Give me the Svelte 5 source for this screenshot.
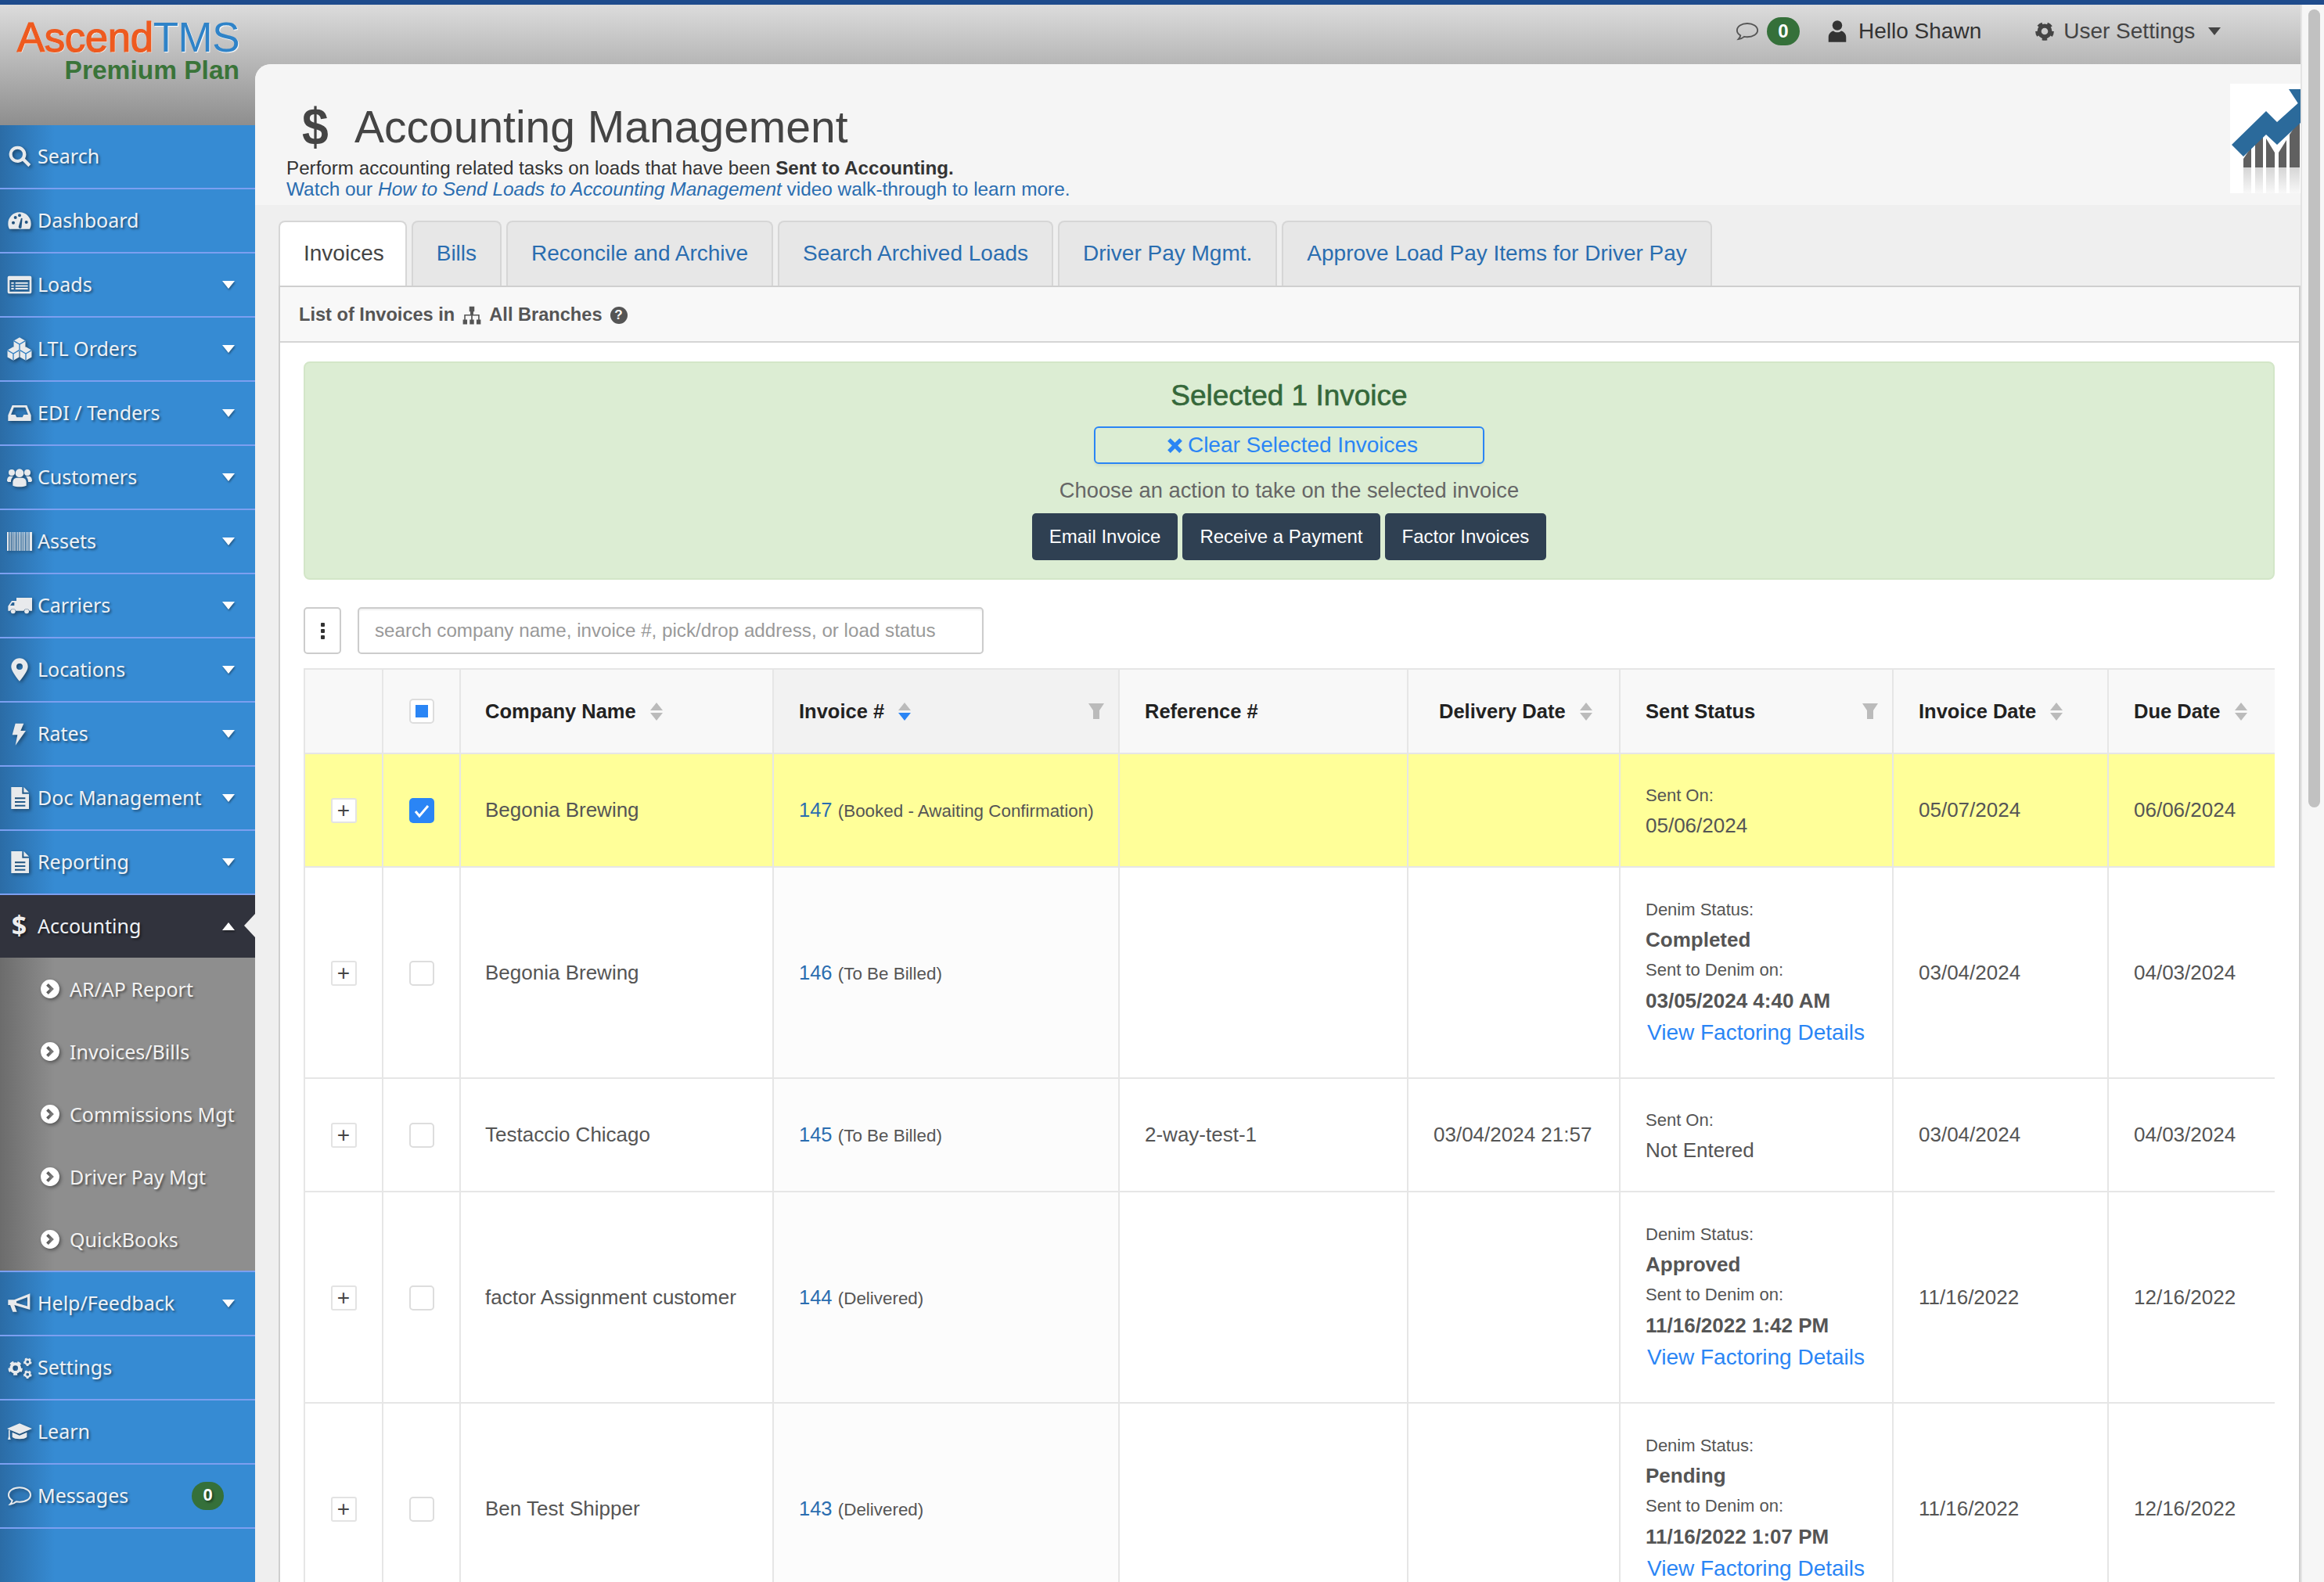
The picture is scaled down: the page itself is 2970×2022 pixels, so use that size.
<script>
  const gear = (cx, cy, r) =>
    `<circle cx="${cx}" cy="${cy}" r="${r}" fill="none" stroke="currentColor" stroke-width="${r * 0.75}"/>` +
    `<circle cx="${cx}" cy="${cy}" r="${r * 1.45}" fill="none" stroke="currentColor" stroke-width="${r * 0.55}" stroke-dasharray="${r * 0.9} ${r * 0.92}"/>`;

  const cube = (x, y) =>
    `<path d="M${x} ${y - 6.5}l5.6 3.2v6.6L${x} ${y + 6.5}l-5.6-3.2v-6.6z"/>` +
    `<path d="M${x - 5.6} ${y - 3.3}L${x} ${y}l5.6-3.3M${x} ${y}v6.5" fill="none" stroke="#2f7dc0" stroke-width="1"/>`;

  const icons = {
    search: '<path fill-rule="evenodd" d="M10 2a8 8 0 1 0 4.9 14.3l5.6 5.6 2.2-2.4-5.5-5.5A8 8 0 0 0 10 2zm0 3a5 5 0 1 1 0 10 5 5 0 0 1 0-10z"/>',
    dashboard: '<path fill-rule="evenodd" d="M12 4C5.4 4 1 9.2 1 15c0 2 .5 3.6 1.3 5h19.4c.8-1.4 1.3-3 1.3-5 0-5.8-4.4-11-11-11zM6 12.5a1.5 1.5 0 1 1 0 3 1.5 1.5 0 0 1 0-3zM8 7.5a1.5 1.5 0 1 1 0 3 1.5 1.5 0 0 1 0-3zM12 5.500a1.500 1.500 0 1 1 0 3 1.500 1.500 0 0 1 0-3zM18.500 12a1.500 1.500 0 1 1 0 3 1.500 1.500 0 0 1 0-3zM11 18l2.500-8.500 1.200.3-.8 8.700a1.500 1.500 0 0 1-2.900-.5z"/>',
    list: '<path fill-rule="evenodd" d="M2 3.500h20A1.500 1.500 0 0 1 23.500 5v14a1.500 1.500 0 0 1-1.500 1.500H2A1.500 1.500 0 0 1 .5 19V5A1.500 1.500 0 0 1 2 3.500zM2.500 7.500v11h19v-11zM4 9.500h2.500V11H4zM8 9.500h12V11H8zM4 12.300h2.500v1.500H4zM8 12.300h12v1.500H8zM4 15h2.500v1.500H4zM8 15h12v1.500H8z"/>',
    cubes: cube(12, 7.5) + cube(6, 16.5) + cube(18, 16.5),
    inbox: '<path fill-rule="evenodd" d="M1 14 5 4.500h14L23 14v5.500H1zM6.500 6.500 3.800 13.500H8l1.200 2.500h5.600l1.200-2.500h4.200L17.500 6.500z"/>',
    group: '<circle cx="12" cy="8" r="4"/><circle cx="4.500" cy="7.500" r="3"/><circle cx="19.500" cy="7.500" r="3"/><path d="M5.500 20v-3c0-3 2-4.500 4-4.500h5c2 0 4 1.500 4 4.500v3c-4 1.500-9 1.500-13 0zM0 15.500c0-3 1.500-4.500 3-4.500h3c-1.500 1.500-2.300 3-2.300 5.500H1zM24 15.500c0-3-1.500-4.500-3-4.500h-3c1.500 1.500 2.300 3 2.300 5.500H23z"/>',
    barcode: '<path d="M0 3h1.500v18H0zM2.500 3h1v18h-1zM4.500 3h.7v18h-.7zM6.200 3h1v18h-1zM8 3h.7v18H8zM9.700 3h.7v18h-.7zM11.200 3h1v18h-1zM13 3h.7v18H13zM14.500 3h.7v18h-.7zM16 3h1v18h-1zM18 3h.7v18H18zM19.500 3h1v18h-1zM21.500 3h2.500v18h-2.500z"/>',
    truck: '<path fill-rule="evenodd" d="M9 4.500h15V17h-2.500a3 3 0 0 0-5.500 0H8.500a3 3 0 0 0-5.500 0H1v-4.500l3.500-5H9zM5 9 3 12h4V9z"/><circle cx="5.800" cy="17.500" r="2.200"/><circle cx="18.800" cy="17.500" r="2.200"/>',
    marker: '<path fill-rule="evenodd" d="M12 1a8 8 0 0 0-8 8c0 5 8 14 8 14s8-9 8-14a8 8 0 0 0-8-8zm0 5a3 3 0 1 1 0 6 3 3 0 0 1 0-6z"/>',
    bolt: '<path d="M8 2h8l-3 7h5L8 23l2-10H5z"/>',
    file: '<path fill-rule="evenodd" d="M4 1.500h10.500V8H21v14.500H4zM7.500 11.500v1.500h10v-1.500zM7.500 15v1.500h10V15zM7.500 18.500V20h10v-1.500zM16 1.500l5 5h-5z"/>',
    chevron: '<path fill-rule="evenodd" d="M12 1a11 11 0 1 0 0 22 11 11 0 0 0 0-22zM10 5.500 16.500 12 10 18.500 7.500 16l4-4-4-4z"/>',
    bullhorn: '<path fill-rule="evenodd" d="M1 8.500h6L22 2.500v15.500L7 13.500l2.500 6.500H5.500L3 13.500H1zM19.500 6 9 10v1.500l10.500 3.200z"/>',
    cogs: gear(8, 12.500, 4) + gear(19.700, 6.500, 2.300) + gear(19.700, 18.500, 2.300),
    cap: '<path d="M12 4 0 9l12 5 12-5zM5 12.500v4.500c2 2.500 12 2.500 14 0v-4.500l-7 3zM1.500 10.300h1.200v6.200l.8 3H.8l.7-3z"/>',
    comment: '<path d="M12 4C6 4 1.500 7 1.500 11c0 2.200 1.400 4 3.500 5.300-.2 1.500-1 2.700-2 3.700 2.200-.2 4.400-1.200 5.800-2.500 1 .2 2.200.3 3.200.3 6 0 10.500-3 10.500-6.800S18 4 12 4z" fill="none" stroke="currentColor" stroke-width="1.500"/>',
    gear: gear(12, 12, 5.500),
    user: '<circle cx="12" cy="6" r="5"/><path d="M3 23v-5c0-4 3-6 5-6.500 1 1 2.500 1.500 4 1.500s3-.5 4-1.500c2 .5 5 2.500 5 6.500v5z"/>',
    sitemap: '<path d="M9 1.500h6v6h-1.200V11H21v6h1.500v5.500h-5V17h2v-4.500h-6.700V17h1.700v5.500h-5V17h1.700v-4.500H4.500V17h2v5.500h-5V17H3v-6h7.200V7.500H9z"/>',
    times: '<path d="M3 6.500l3.500-3.500L12 8.500 17.500 3 21 6.500 15.500 12l5.500 5.500-3.500 3.500L12 15.500 6.500 21 3 17.500 8.500 12z"/>',
    funnel: '<path d="M2 2h20l-6 9v11H8V11z"/>'
  };

  const nav = [
    { label: 'Search', icon: 'search' },
    { label: 'Dashboard', icon: 'dashboard' },
    { label: 'Loads', icon: 'list', caret: true },
    { label: 'LTL Orders', icon: 'cubes', caret: true },
    { label: 'EDI / Tenders', icon: 'inbox', caret: true },
    { label: 'Customers', icon: 'group', caret: true },
    { label: 'Assets', icon: 'barcode', caret: true },
    { label: 'Carriers', icon: 'truck', caret: true },
    { label: 'Locations', icon: 'marker', caret: true },
    { label: 'Rates', icon: 'bolt', caret: true },
    { label: 'Doc Management', icon: 'file', caret: true },
    { label: 'Reporting', icon: 'file', caret: true }
  ];
  const subnav = ['AR/AP Report', 'Invoices/Bills', 'Commissions Mgt', 'Driver Pay Mgt', 'QuickBooks'];
  const navEnd = [
    { label: 'Help/Feedback', icon: 'bullhorn', caret: true },
    { label: 'Settings', icon: 'cogs' },
    { label: 'Learn', icon: 'cap' },
    { label: 'Messages', icon: 'comment', badge: '0' }
  ];

  const tabs = ['Invoices', 'Bills', 'Reconcile and Archive', 'Search Archived Loads', 'Driver Pay Mgmt.', 'Approve Load Pay Items for Driver Pay'];

  const columns = [
    { label: '' },
    { label: '', check: true },
    { label: 'Company Name', sort: true },
    { label: 'Invoice #', sort: true, active: true, filter: true },
    { label: 'Reference #' },
    { label: 'Delivery Date', sort: true, inset: true },
    { label: 'Sent Status', filter: true },
    { label: 'Invoice Date', sort: true },
    { label: 'Due Date', sort: true }
  ];
  const widths = [100, 99, 400, 442, 369, 271, 349, 275, 213];

  const rows = [
    { company: 'Begonia Brewing', num: '147', state: 'Booked - Awaiting Confirmation', ref: '', delivery: '', sent: '05/06/2024', invoice: '05/07/2024', due: '06/06/2024', selected: true },
    { company: 'Begonia Brewing', num: '146', state: 'To Be Billed', ref: '', delivery: '', denim: 'Completed', denimOn: '03/05/2024 4:40 AM', invoice: '03/04/2024', due: '04/03/2024' },
    { company: 'Testaccio Chicago', num: '145', state: 'To Be Billed', ref: '2-way-test-1', delivery: '03/04/2024 21:57', sent: 'Not Entered', invoice: '03/04/2024', due: '04/03/2024' },
    { company: 'factor Assignment customer', num: '144', state: 'Delivered', ref: '', delivery: '', denim: 'Approved', denimOn: '11/16/2022 1:42 PM', invoice: '11/16/2022', due: '12/16/2022' },
    { company: 'Ben Test Shipper', num: '143', state: 'Delivered', ref: '', delivery: '', denim: 'Pending', denimOn: '11/16/2022 1:07 PM', invoice: '11/16/2022', due: '12/16/2022' }
  ];
</script>

{#snippet icon(name, cls)}
  <svg class={cls} viewBox="0 0 24 24" fill="currentColor" aria-hidden="true">{@html icons[name]}</svg>
{/snippet}

{#snippet navItem(item)}
  <a class="nav-item" href="#top">
    <span class="nav-icon">{@render icon(item.icon, 'nav-svg')}</span>
    <span class="nav-label">{item.label}</span>
    {#if item.caret}<span class="caret"></span>{/if}
    {#if item.badge}<span class="nav-badge">{item.badge}</span>{/if}
  </a>
{/snippet}

<div class="app">
  <div class="topline"></div>
  <div class="frame">
    <aside class="sidebar">
      <div class="brand">
        <div class="brand-name"><span class="ascend">Ascend</span><span class="tms">TMS</span></div>
        <div class="brand-plan">Premium Plan</div>
      </div>
      <nav class="nav">
        {#each nav as item}
          {@render navItem(item)}
        {/each}
        <a class="nav-item open" href="#top">
          <span class="nav-icon dollar">$</span>
          <span class="nav-label">Accounting</span>
          <span class="caret up"></span>
          <span class="notch"></span>
        </a>
        <div class="subnav">
          {#each subnav as label}
            <a class="sub-item" href="#top">{@render icon('chevron', 'sub-svg')}<span>{label}</span></a>
          {/each}
        </div>
        {#each navEnd as item}
          {@render navItem(item)}
        {/each}
      </nav>
    </aside>

    <div class="main">
      <header class="topbar">
        <span class="top-chat">{@render icon('comment', 'chat-svg')}</span>
        <span class="top-badge">0</span>
        <span class="top-user">{@render icon('user', 'user-svg')}Hello Shawn</span>
        <span class="top-settings">{@render icon('gear', 'gear-svg')}User Settings<span class="top-caret"></span></span>
      </header>

      <div class="content">
        <section class="page-head">
          <div class="page-text">
            <h1><span class="title-icon">$</span>Accounting Management</h1>
            <p>Perform accounting related tasks on loads that have been <b>Sent to Accounting.</b></p>
            <p class="watch">Watch our <i>How to Send Loads to Accounting Management</i> video walk-through to learn more.</p>
          </div>
          <svg class="chart" viewBox="0 0 90 140" aria-hidden="true">
            <defs>
              <linearGradient id="fade" x1="0" y1="0" x2="0" y2="1">
                <stop offset="0" stop-color="#d6d6d6" />
                <stop offset="1" stop-color="#f8f8f8" />
              </linearGradient>
            </defs>
            <rect width="90" height="140" fill="#fff" />
            <path d="M17 107V96l10-15v26zM32 107V74l10-17v50zM46 107V70l11 18v19zM62 107V88l10-16v35zM76 107V65l13-20v62z" fill="#606060" />
            <path d="M17 107h10v33H17zM32 107h10v33H32zM46 107h11v33H46zM62 107h10v33H62zM76 107h13v33H76z" fill="url(#fade)" />
            <path d="M2 78 46 35l14 14 30-27v28L60 78 46 65 17 93z" fill="#2b6a9b" />
            <path d="M75 7h15v23z" fill="#2b6a9b" />
          </svg>
        </section>

        <div class="tabs">
          {#each tabs as tab, i}
            <a class="tab" class:active={i === 0} href="#top">{tab}</a>
          {/each}
        </div>

        <section class="panel">
          <div class="panel-head">
            <span>List of Invoices in</span>
            {@render icon('sitemap', 'map-svg')}
            <span>All Branches</span>
            <span class="help">?</span>
          </div>
          <div class="panel-body">
            <div class="selected">
              <h3>Selected 1 Invoice</h3>
              <button class="clear">{@render icon('times', 'x-svg')}Clear Selected Invoices</button>
              <p>Choose an action to take on the selected invoice</p>
              <div class="actions">
                <button>Email Invoice</button>
                <button>Receive a Payment</button>
                <button>Factor Invoices</button>
              </div>
            </div>

            <div class="search-row">
              <button class="kebab" aria-label="More"><i></i><i></i><i></i></button>
              <input placeholder="search company name, invoice #, pick/drop address, or load status" />
            </div>

            <table>
              <colgroup>
                {#each widths as w}<col style="width:{w}px" />{/each}
              </colgroup>
              <thead>
                <tr>
                  {#each columns as col}
                    <th class:sorted={col.active} class:inset={col.inset}>
                      {#if col.check}
                        <span class="check center partial"><i></i></span>
                      {:else if col.label}
                        <div class="th-inner">
                          <span>{col.label}</span>
                          {#if col.sort}
                            <span class="sort" class:desc={col.active}><i class="s-up"></i><i class="s-down"></i></span>
                          {/if}
                          {#if col.filter}
                            {@render icon('funnel', 'funnel')}
                          {/if}
                        </div>
                      {/if}
                    </th>
                  {/each}
                </tr>
              </thead>
              <tbody>
                {#each rows as row}
                  <tr class:selected-row={row.selected} class:tall={row.denim}>
                    <td class="ctr"><span class="plus">+</span></td>
                    <td class="ctr">
                      {#if row.selected}
                        <span class="check checked">
                          <svg viewBox="0 0 24 24" aria-hidden="true"><path d="M4 13l5 6L20 6" fill="none" stroke="#fff" stroke-width="3" /></svg>
                        </span>
                      {:else}
                        <span class="check"></span>
                      {/if}
                    </td>
                    <td>{row.company}</td>
                    <td class="num-cell"><a href="#top">{row.num}</a> <small>({row.state})</small></td>
                    <td>{row.ref}</td>
                    <td>{row.delivery}</td>
                    <td class="status">
                      {#if row.denim}
                        <div class="lbl">Denim Status:</div>
                        <div class="val"><b>{row.denim}</b></div>
                        <div class="lbl on">Sent to Denim on:</div>
                        <div class="val"><b>{row.denimOn}</b></div>
                        <a class="view" href="#top">View Factoring Details</a>
                      {:else}
                        <div class="lbl">Sent On:</div>
                        <div class="val">{row.sent}</div>
                      {/if}
                    </td>
                    <td>{row.invoice}</td>
                    <td>{row.due}</td>
                  </tr>
                {/each}
              </tbody>
            </table>
          </div>
        </section>
      </div>
    </div>

    <div class="scrollbar"><div class="thumb"></div></div>
  </div>
</div>

<style>
  :global(body) {
    margin: 0;
    overflow: hidden;
    background: #efefef;
  }

  .app {
    width: 2970px;
    height: 2022px;
    overflow: hidden;
    font-family: "Liberation Sans", Arial, sans-serif;
    color: #555;
    display: flex;
    flex-direction: column;
  }

  a { text-decoration: none; }

  .topline {
    height: 6px;
    flex: none;
    background: #1e4b8c;
  }

  .frame {
    flex: 1;
    display: flex;
    min-height: 0;
  }

  /* sidebar */
  .sidebar {
    width: 326px;
    flex: none;
    display: flex;
    flex-direction: column;
    background: linear-gradient(90deg, #2b6ca6, #368bd3 70px);
  }

  .brand {
    height: 154px;
    flex: none;
    box-sizing: border-box;
    padding: 17px 20px 0 0;
    background: linear-gradient(#dcdcdc, #8e8e8e);
    text-align: right;
  }

  .brand-name {
    font-size: 53px;
    line-height: 50px;
    letter-spacing: -0.5px;
    text-shadow: 1px 1px 1px #fff;
  }

  .ascend { color: #ee5a1f; -webkit-text-stroke: 1.2px #ee5a1f; }
  .tms { color: #2f83c8; }

  .brand-plan {
    font-size: 33.500px;
    line-height: 30px;
    font-weight: bold;
    color: #3a7439;
    margin-top: 2px;
  }

  .nav-item {
    height: 82px;
    box-sizing: border-box;
    display: flex;
    align-items: center;
    border-bottom: 2px solid #7c9ff0;
    color: #eef2f6;
    font-family: "Noto Sans", sans-serif;
    font-size: 25px;
    text-shadow: 2px 2px 3px rgba(0, 0, 0, 0.45);
    position: relative;
  }

  .nav-icon {
    width: 48px;
    flex: none;
    display: flex;
    justify-content: center;
    padding-left: 1px;
    box-sizing: border-box;
  }

  .nav-svg {
    width: 32px;
    height: 32px;
    color: #e8eaec;
    filter: drop-shadow(2px 2px 2px rgba(0, 0, 0, 0.4));
  }

  .nav-label { flex: 1; margin-top: -2px; }

  .caret {
    width: 0;
    height: 0;
    margin-right: 26px;
    border-left: 8px solid transparent;
    border-right: 8px solid transparent;
    border-top: 10px solid #fff;
    filter: drop-shadow(1px 2px 1px rgba(0, 0, 0, 0.35));
  }

  .caret.up {
    border-top: 0;
    border-bottom: 10px solid #fff;
  }

  .nav-item.open {
    height: 80px;
    border-bottom: 0;
    background: #31333d;
  }

  .dollar {
    font-size: 34px;
    font-weight: bold;
    color: #eee;
    margin-top: -4px;
  }

  .notch {
    position: absolute;
    right: 0;
    top: 24px;
    width: 0;
    height: 0;
    border-top: 15px solid transparent;
    border-bottom: 15px solid transparent;
    border-right: 14px solid #efefef;
  }

  .subnav {
    height: 402px;
    box-sizing: border-box;
    flex: none;
    border-bottom: 2px solid #7c9ff0;
    background: linear-gradient(90deg, #6c6c6c, #8e8e8e 70px);
  }

  .sub-item {
    height: 80px;
    display: flex;
    align-items: center;
    padding-left: 51px;
    gap: 12px;
    color: #f2f2f2;
    font-family: "Noto Sans", sans-serif;
    font-size: 25px;
    text-shadow: 2px 2px 3px rgba(0, 0, 0, 0.45);
  }

  .sub-svg {
    width: 26px;
    height: 26px;
    color: #fff;
    filter: drop-shadow(2px 2px 2px rgba(0, 0, 0, 0.4));
  }

  .nav-badge {
    width: 41px;
    height: 36px;
    line-height: 34px;
    margin-right: 40px;
    border-radius: 18px;
    background: #35703a;
    color: #fff;
    text-align: center;
    font-size: 22px;
    font-weight: bold;
    font-family: "Liberation Sans", sans-serif;
  }

  /* main column */
  .main {
    flex: 1;
    min-width: 0;
    display: flex;
    flex-direction: column;
    background: linear-gradient(#dcdcdc, #8e8e8e) no-repeat;
    background-size: 100% 154px;
  }

  .topbar {
    height: 76px;
    flex: none;
    box-sizing: border-box;
    padding: 0 0 8px 1892px;
    display: flex;
    align-items: center;
    font-size: 28px;
    color: #333;
  }

  .top-chat { display: flex; color: #555; }
  .chat-svg { width: 30px; height: 32px; }

  .top-badge {
    width: 42px;
    height: 36px;
    margin-left: 10px;
    border-radius: 18px;
    background: #35703a;
    color: #fff;
    font-size: 24px;
    font-weight: bold;
    line-height: 36px;
    text-align: center;
  }

  .top-user {
    display: flex;
    align-items: center;
    gap: 12px;
    margin-left: 33px;
  }

  .user-svg { width: 30px; height: 30px; color: #333; }

  .top-settings {
    display: flex;
    align-items: center;
    gap: 9px;
    margin-left: 66px;
    color: #444;
  }

  .gear-svg { width: 30px; height: 30px; color: #444; }

  .top-caret {
    width: 0;
    height: 0;
    margin-left: 8px;
    border-left: 8px solid transparent;
    border-right: 8px solid transparent;
    border-top: 10px solid #444;
  }

  .content {
    flex: 1;
    min-height: 0;
    background: #efefef;
    border-top-left-radius: 20px;
    overflow: hidden;
  }

  .page-head {
    height: 180px;
    box-sizing: border-box;
    background: #f5f5f5;
    display: flex;
    justify-content: space-between;
    align-items: flex-start;
    padding: 25px 0 0 40px;
  }

  .page-text { padding-top: 17px; }

  h1 {
    margin: 0 0 1px;
    font-size: 57px;
    line-height: 76px;
    font-weight: normal;
    color: #444;
    display: flex;
    align-items: center;
  }

  .title-icon {
    width: 87px;
    padding-left: 20px;
    box-sizing: border-box;
    font-weight: bold;
    font-size: 66px;
    transform: scaleX(0.92);
    transform-origin: 20px 50%;
  }

  .page-text p {
    margin: 0;
    font-size: 24.200px;
    line-height: 27px;
    color: #333;
    white-space: nowrap;
  }

  .page-text p.watch { color: #2a6db0; font-size: 24.400px; }

  .chart { width: 90px; height: 140px; flex: none; }

  /* tabs */
  .tabs {
    display: flex;
    gap: 6px;
    margin: 20px 0 0 30px;
    height: 83px;
  }

  .tab {
    box-sizing: border-box;
    height: 83px;
    line-height: 79px;
    padding: 0 30px;
    font-size: 28px;
    color: #2a6db0;
    background: #e7e7e7;
    border: 2px solid #d6d6d6;
    border-bottom: 0;
    border-radius: 8px 8px 0 0;
    white-space: nowrap;
  }

  .tab.active {
    background: #fff;
    color: #444;
    padding-right: 27px;
  }

  .panel {
    margin-left: 30px;
    border: 2px solid #cfcfcf;
    border-right-width: 2px;
    background: #fff;
  }

  .panel-head {
    height: 71px;
    box-sizing: border-box;
    background: #f8f8f8;
    border-bottom: 2px solid #d5d5d5;
    padding: 2px 0 0 24px;
    display: flex;
    align-items: center;
    gap: 10px;
    font-size: 23.600px;
    font-weight: bold;
    color: #555;
  }

  .map-svg { width: 26px; height: 26px; margin: 0 -1px; }

  .help {
    width: 22px;
    height: 22px;
    border-radius: 50%;
    background: #555;
    color: #fff;
    font-size: 17px;
    line-height: 22px;
    text-align: center;
  }

  .panel-body {
    padding: 24px 31px 0 30px;
  }

  .selected {
    height: 279px;
    box-sizing: border-box;
    border: 2px solid #d3e6c8;
    border-radius: 8px;
    background: #dcedd3;
    display: flex;
    flex-direction: column;
    align-items: center;
    padding-top: 20px;
  }

  .selected h3 {
    margin: 0;
    font-size: 37px;
    line-height: 44px;
    font-weight: normal;
    -webkit-text-stroke: 0.6px #35683a;
    color: #35683a;
  }

  .clear {
    width: 499px;
    height: 48px;
    margin-top: 17px;
    padding: 0 0 0 6px;
    border: 2px solid #2a85f5;
    border-radius: 6px;
    background: transparent;
    color: #2a85f5;
    font: 28px "Liberation Sans", sans-serif;
    box-shadow: 0 3px 3px rgba(0, 0, 0, 0.05);
    display: flex;
    align-items: center;
    justify-content: center;
    gap: 4px;
  }

  .x-svg { width: 25px; height: 25px; }

  .selected p {
    margin: 16px 0 0;
    font-size: 27.300px;
    line-height: 36px;
    color: #666;
  }

  .actions {
    display: flex;
    gap: 6px;
    margin-top: 11px;
  }

  .actions button {
    height: 60px;
    padding: 0 22px;
    border: 0;
    border-radius: 5px;
    background: #2f4052;
    color: #fff;
    font: 24px "Liberation Sans", sans-serif;
  }

  .search-row {
    display: flex;
    gap: 21px;
    margin-top: 35px;
    height: 60px;
  }

  .kebab {
    width: 48px;
    height: 60px;
    padding: 0;
    box-sizing: border-box;
    border: 2px solid #ccc;
    border-radius: 5px;
    background: #fff;
    display: flex;
    flex-direction: column;
    align-items: center;
    justify-content: center;
    gap: 3px;
  }

  .kebab i {
    width: 5px;
    height: 5px;
    background: #333;
    border-radius: 1px;
  }

  input {
    width: 800px;
    height: 60px;
    box-sizing: border-box;
    padding: 0 20px;
    border: 2px solid #ccc;
    border-radius: 5px;
    box-shadow: inset 0 2px 2px rgba(0, 0, 0, 0.06);
    font: 24.200px "Liberation Sans", sans-serif;
    outline: none;
  }

  input::placeholder { color: #999; opacity: 1; }

  /* table */
  table {
    margin-top: 18px;
    width: 2518px;
    table-layout: fixed;
    border-collapse: collapse;
    font-size: 26px;
    color: #555;
    border: 2px solid #e6e6e6;
    border-bottom: 0;
    border-right: 0;
  }

  th, td {
    border: 2px solid #e6e6e6;
    padding: 0 0 0 32px;
    text-align: left;
    white-space: nowrap;
  }

  tr > :last-child { border-right: 0; }
  tr > :nth-child(3) { padding-left: 31px; }

  th {
    height: 106px;
    background: #f8f8f8;
    color: #222;
    font-weight: bold;
    font-size: 25.500px;
  }

  th.sorted { background: #f2f2f2; }
  th.inset { padding-left: 39px; }

  .th-inner {
    display: flex;
    align-items: center;
    gap: 18px;
    padding-right: 16px;
  }

  .th-inner .funnel {
    margin-left: auto;
    width: 24px;
    height: 24px;
    color: #bbb;
  }

  .sort {
    display: flex;
    flex-direction: column;
    gap: 3px;
  }

  .sort i {
    width: 0;
    height: 0;
    border-left: 8px solid transparent;
    border-right: 8px solid transparent;
  }

  .s-up { border-bottom: 10px solid #bbb; }
  .s-down { border-top: 10px solid #bbb; }
  .desc .s-down { border-top-color: #2a85f5; }

  td { height: 143px; background: #fff; }
  td.num-cell { background: #fcfcfc; }
  .tall td { height: 268px; }

  .selected-row td,
  .selected-row td.num-cell { background: #ffff99; }

  td.ctr, th:nth-child(-n + 2) { padding: 0; text-align: center; }

  .plus {
    display: inline-flex;
    align-items: center;
    justify-content: center;
    box-sizing: border-box;
    width: 33px;
    height: 32px;
    border: 2px solid #e3e3e3;
    border-radius: 3px;
    background: #fff;
    color: #444;
    font-size: 28px;
    line-height: 1;
    vertical-align: middle;
  }

  .check {
    display: inline-flex;
    align-items: center;
    justify-content: center;
    box-sizing: border-box;
    width: 32px;
    height: 32px;
    border: 2px solid #ddd;
    border-radius: 5px;
    background: #fff;
    vertical-align: middle;
  }

  .check.partial i {
    width: 16px;
    height: 16px;
    background: #2a85f5;
  }

  .check.checked {
    border: 0;
    background: #2a85f5;
  }

  .check.checked svg { width: 24px; height: 24px; }

  .num-cell a {
    color: #2a6db0;
    font-size: 25.500px;
  }

  small { font-size: 22.400px; }

  .lbl {
    font-size: 22px;
    line-height: 38px;
  }

  .lbl.on { line-height: 40px; }

  .val {
    font-size: 26px;
    line-height: 38px;
  }

  .view {
    display: block;
    color: #2a85f5;
    font-size: 28px;
    line-height: 44px;
    margin-left: 2px;
  }

  /* page scrollbar */
  .scrollbar {
    width: 30px;
    flex: none;
    box-sizing: border-box;
    padding: 6px 5px 0 8px;
    background: #f6f6f6;
    border-left: 2px solid #e4e4e4;
  }

  .thumb {
    height: 1020px;
    border-radius: 9px;
    background: #c1c1c1;
  }
</style>
